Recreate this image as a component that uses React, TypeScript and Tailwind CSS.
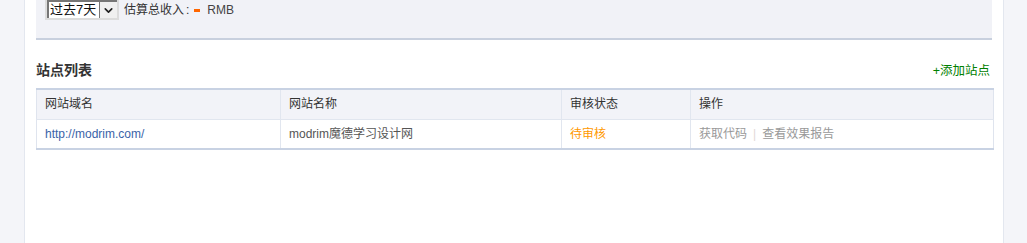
import { ChevronDown } from 'lucide-react';

const font = { fontFamily: '"Liberation Sans", "Noto Sans CJK SC", sans-serif' };

const sites = [
  { domain: 'http://modrim.com/', name: 'modrim魔德学习设计网', status: '待审核' },
];

export default function App() {
  return (
    <div className="flex h-[243px] w-[1027px] bg-[#f4f5f9] text-[12px] text-[#333]" style={font}>
      <div className="w-[24px] shrink-0" />
      {/* 主内容 */}
      <div className="w-[980px] shrink-0 border-x border-[#e3e7ef] bg-white px-[11px]">
        {/* 收入筛选 */}
        <div className="flex h-[40px] items-start border-b-2 border-[#c8d0de] bg-[#f1f2f7] pl-[9px]">
          <div className="-mt-[2px] flex h-[22px] w-[74px] items-center border-2 border-[#dcdcdc] bg-white">
            <div className="flex h-full flex-1 items-center border-l-2 border-t-2 border-[#767676] pl-[1px] text-[13px] text-[#111]">
              过去7天
            </div>
            <div className="flex h-full w-[18px] items-center justify-center border-t-2 border-l border-[#767676] bg-[#f0f0f0]">
              <ChevronDown size={13} strokeWidth={3} className="text-[#222]" />
            </div>
          </div>
          <div className="ml-[5px] flex h-[20px] items-center text-[12px] text-[#333]">
            估算总收入<span className="ml-[2px]">:</span>
            <span className="ml-[5px] mr-[7px] inline-block h-[3px] w-[6px] bg-[#ff6600]" />
            <span className="text-[12px] text-[#444]">RMB</span>
          </div>
        </div>

        {/* 站点列表标题 */}
        <div className="flex h-[48px] items-end justify-between pb-[7px] pr-[2px]">
          <h2 className="text-[14px] font-bold text-[#333]">站点列表</h2>
          <a className="text-[12.5px] text-[#008000]">+添加站点</a>
        </div>

        {/* 表格 */}
        <table className="w-[958px] table-fixed border-collapse border-x border-[#dfe4ee] text-[12px]">
          <colgroup>
            <col className="w-[244px]" />
            <col className="w-[281px]" />
            <col className="w-[129px]" />
            <col />
          </colgroup>
          <thead>
            <tr className="h-[30px] border-t-2 border-[#c8d2e3] bg-[#f2f3f8] text-left text-[#333]">
              <th className="border-r border-b border-[#e1e6ef] pl-[8px] font-normal">网站域名</th>
              <th className="border-r border-b border-[#e1e6ef] pl-[8px] font-normal">网站名称</th>
              <th className="border-r border-b border-[#e1e6ef] pl-[8px] font-normal">审核状态</th>
              <th className="border-b border-[#e1e6ef] pl-[8px] font-normal">操作</th>
            </tr>
          </thead>
          <tbody>
            {sites.map((site, idx) => (
              <tr key={idx} className="h-[30px] border-b-2 border-[#c8d2e3]">
                <td className="border-r border-[#e1e6ef] pl-[8px] text-[#3a63a8]">{site.domain}</td>
                <td className="border-r border-[#e1e6ef] pl-[8px] text-[#555]">{site.name}</td>
                <td className="border-r border-[#e1e6ef] pl-[8px] text-[#ff9900]">{site.status}</td>
                <td className="pl-[8px] text-[#999]">
                  获取代码<span className="mx-[6px] text-[#e2d8d8]">|</span>查看效果报告
                </td>
              </tr>
            ))}
          </tbody>
        </table>
      </div>
      <div className="flex-1" />
    </div>
  );
}
